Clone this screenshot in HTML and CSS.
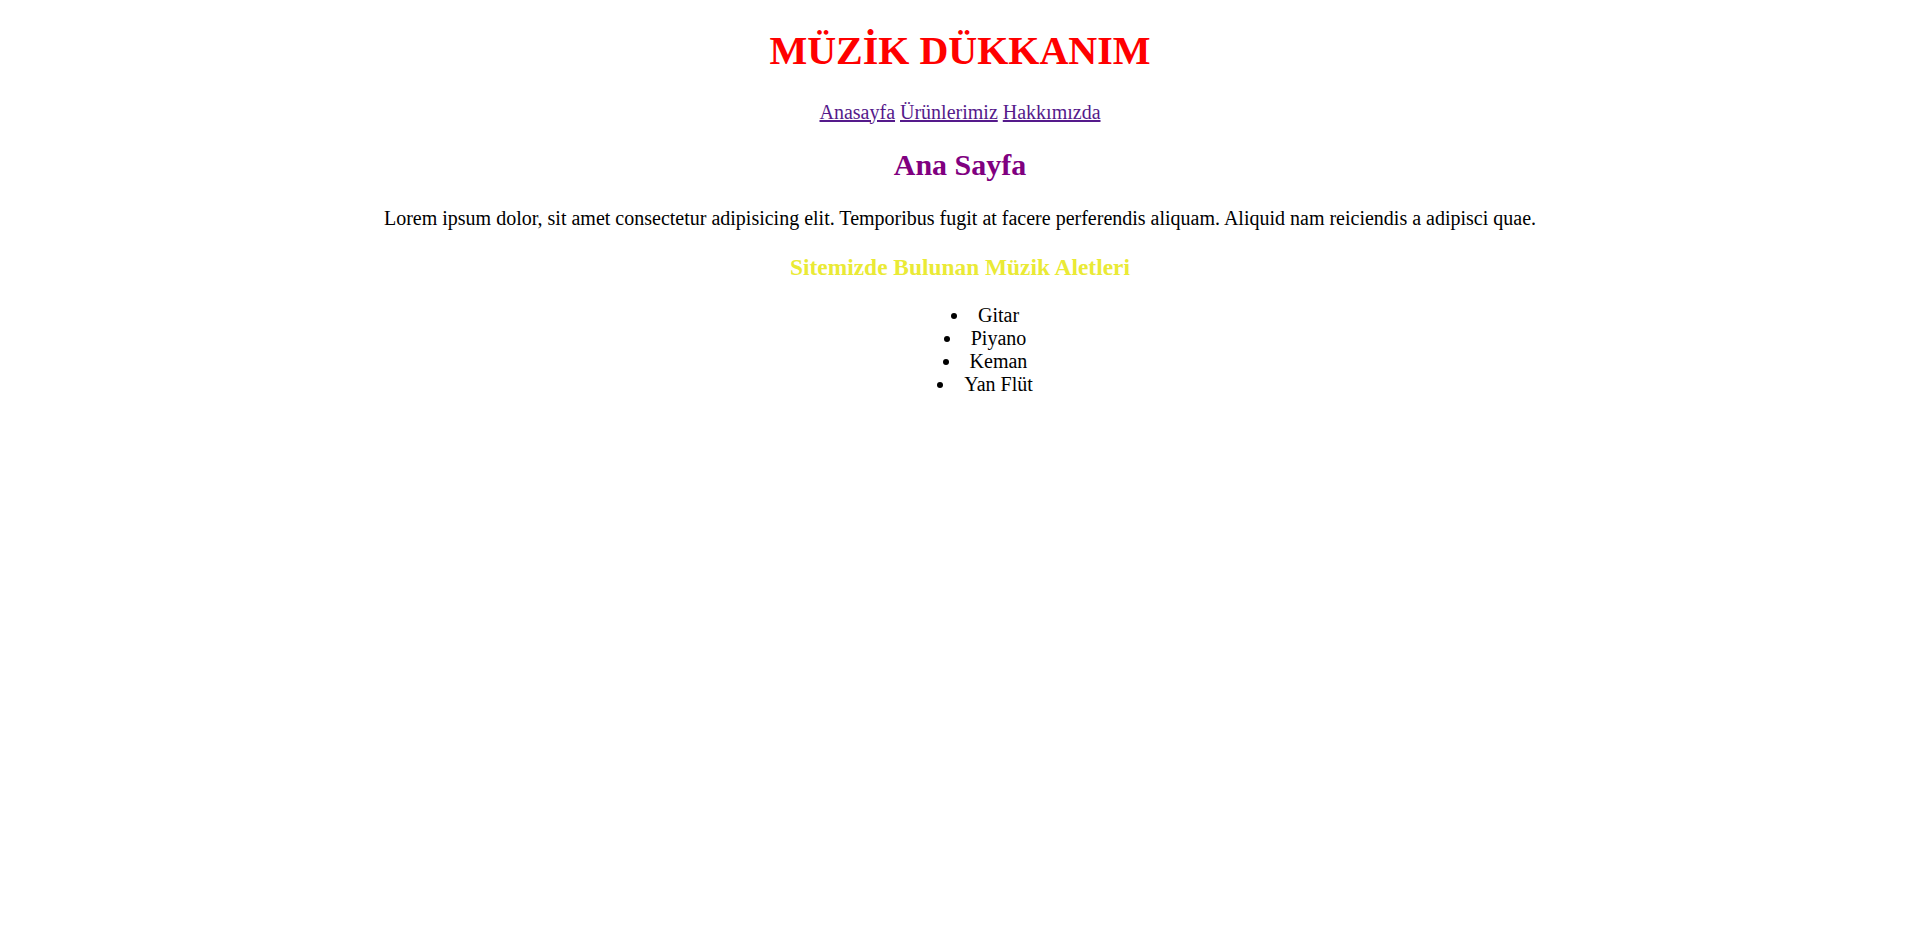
FILE: index.html
```html
<!DOCTYPE html>
<html lang="tr">
<head>
<meta charset="utf-8">
<title>Müzik Dükkanım</title>
<link rel="stylesheet" href="styles.css">
</head>
<body>
<div class="page">
  <h1 class="title">MÜZİK DÜKKANIM</h1>
  <nav class="nav">
    <a href="#">Anasayfa</a>
    <a href="#">Ürünlerimiz</a>
    <a href="#">Hakkımızda</a>
  </nav>
  <h2 class="heading">Ana Sayfa</h2>
  <p class="text">Lorem ipsum dolor, sit amet consectetur adipisicing elit. Temporibus fugit at facere perferendis aliquam. Aliquid nam reiciendis a adipisci quae.</p>
  <h3 class="subheading">Sitemizde Bulunan Müzik Aletleri</h3>
  <ul class="list">
    <li>Gitar</li>
    <li>Piyano</li>
    <li>Keman</li>
    <li>Yan Flüt</li>
  </ul>
</div>
</body>
</html>
```

FILE: styles.css
```css
body {
  margin: 0;
  font-family: "Liberation Serif", "Times New Roman", serif;
  font-size: 20px;
  background: #ffffff;
  color: #000000;
}
.page {
  text-align: center;
}
.title {
  color: #ff0000;
  font-size: 2em;
  margin: 0.67em 0;
}
.nav a {
  color: #551a8b;
}
.heading {
  color: #800080;
  font-size: 1.5em;
  margin: 0.83em 0;
}
.text {
  margin: 1em 0;
}
.subheading {
  color: #eaea35;
  font-size: 1.17em;
  margin: 1em 0;
}
.list {
  list-style-position: inside;
  padding: 0 0 0 50px;
  margin: 1em 0;
}
```
